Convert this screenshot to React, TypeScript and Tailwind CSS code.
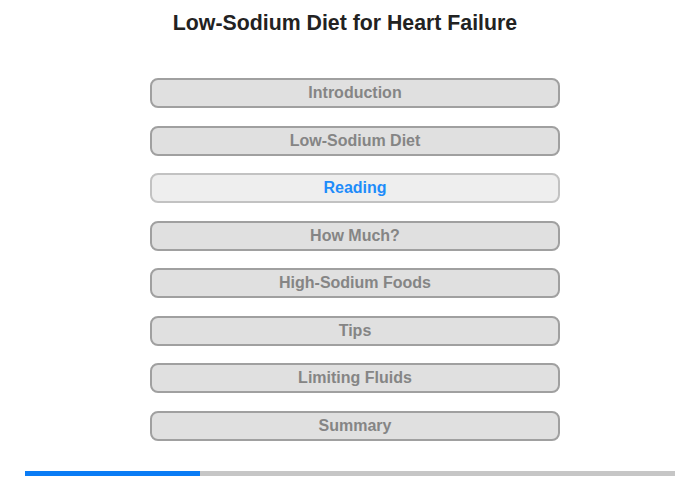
const sections = [
  'Introduction',
  'Low-Sodium Diet',
  'Reading',
  'How Much?',
  'High-Sodium Foods',
  'Tips',
  'Limiting Fluids',
  'Summary',
];

const current = 2;

export default function App() {
  return (
    <div className="w-[700px] h-[480px] bg-white overflow-hidden font-['Liberation_Sans',Arial,sans-serif]">
      <div className="pt-[10px] h-[78px]">
        <h1 className="w-[690px] text-center text-[21.3px] leading-[26px] font-bold text-[#222222]">
          Low-Sodium Diet for Heart Failure
        </h1>
      </div>

      <div className="flex flex-col gap-[17.5px] ml-[150px] w-[410px]">
        {sections.map((label, i) => (
          <button
            key={label}
            className={
              i === current
                ? 'h-[30px] rounded-[8px] border-2 border-[#c2c2c2] bg-[#eeeeee] text-[16px] font-bold text-[#1e8cfa]'
                : 'h-[30px] rounded-[8px] border-2 border-[#a0a0a0] bg-[#e0e0e0] text-[16px] font-bold text-[#858585]'
            }
          >
            {label}
          </button>
        ))}
      </div>

      <div className="mt-[30.5px] ml-[25px] w-[650px] h-[5px] bg-[#c6c6c6] flex">
        <div className="w-[175px] h-full bg-[#0a7cf5]" />
      </div>
    </div>
  );
}
